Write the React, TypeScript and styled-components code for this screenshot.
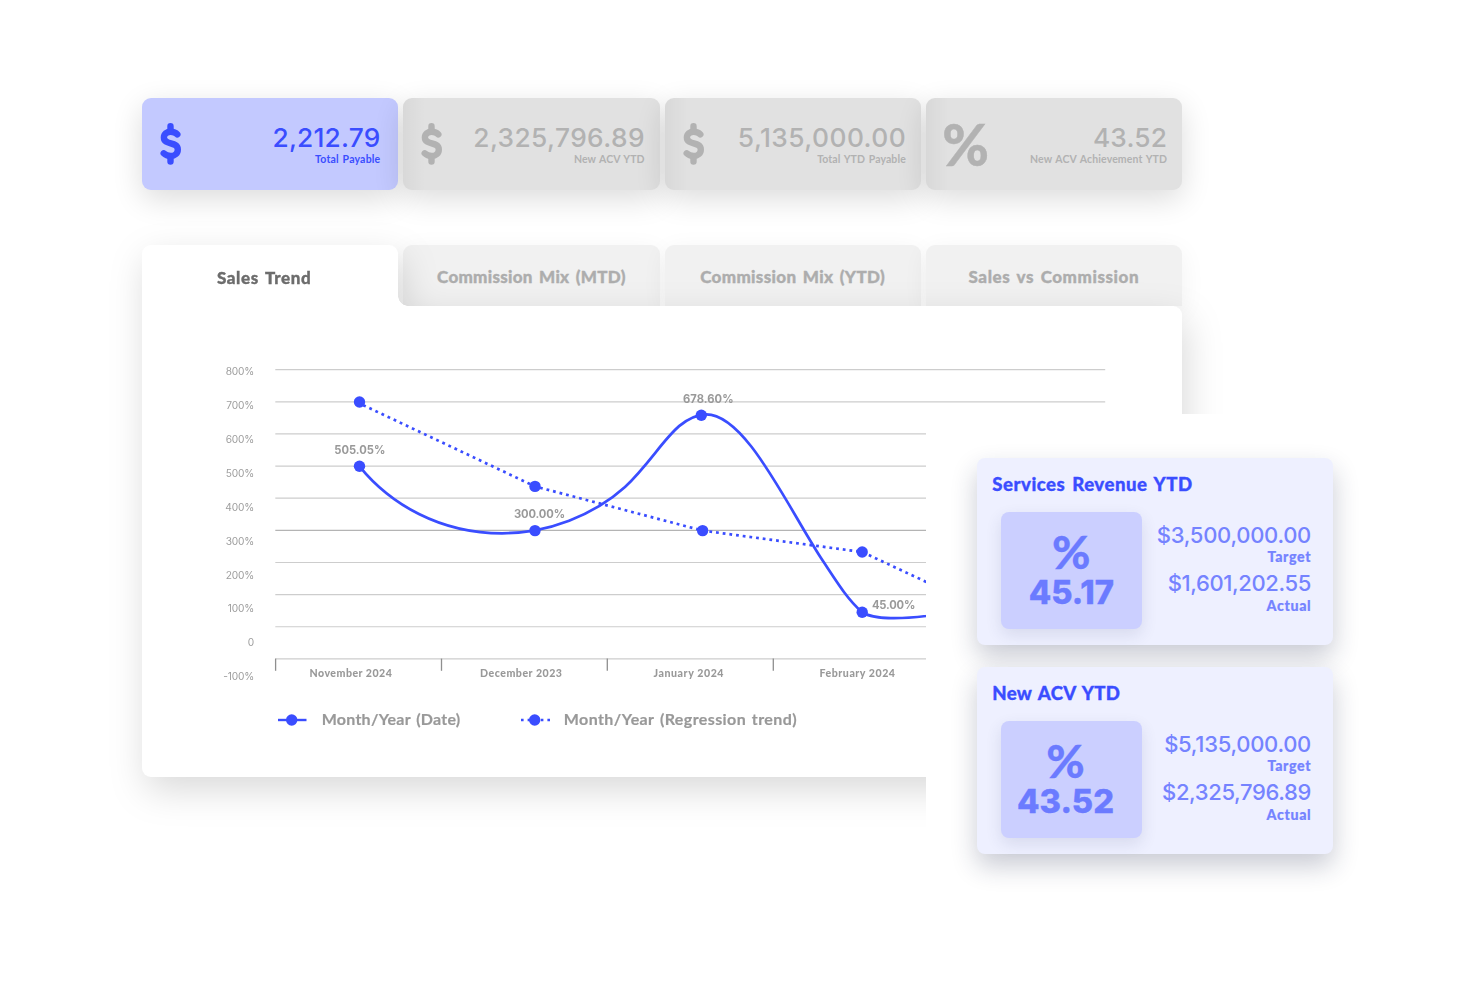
import React from "react";
import styled, { createGlobalStyle } from "styled-components";

const BLUE = "#3a4dff";

const GlobalStyle = createGlobalStyle`
  *, *::before, *::after { box-sizing: border-box; }
  body { margin: 0; background: #fff; }
`;

const Page = styled.main`
  position: relative;
  width: 1480px;
  height: 987px;
  overflow: hidden;
  background: #fff;
  padding: 98px 0 0 142px;
  font-family: Lato, "Liberation Sans", sans-serif;
`;

const Dashboard = styled.div`
  width: 1040px;
  display: flex;
  flex-direction: column;
  gap: 54.5px;
`;

/* ---------- KPI row ---------- */

const KpiRow = styled.section`
  display: grid;
  grid-template-columns: repeat(4, 1fr);
  gap: 5px;
`;

const KpiCard = styled.article<{ $active?: boolean }>`
  height: 92px;
  display: flex;
  justify-content: space-between;
  align-items: flex-start;
  padding: 25.3px 15px 0 18px;
  border-radius: 9px;
  color: ${(p) => (p.$active ? BLUE : "#b2b2b2")};
  background: ${(p) =>
    p.$active
      ? "#c3c9ff"
      : "linear-gradient(to right, rgba(0,0,0,.04), rgba(0,0,0,0) 22px), #e1e1e1"};
  box-shadow: 0 9px 30px rgba(0, 0, 0, 0.14);

  &:first-child { padding-right: 18px; }
`;

const KpiFigures = styled.div`
  display: flex;
  flex-direction: column;
  align-items: flex-end;
`;

const KpiValue = styled.div<{ $track: number }>`
  font: 500 26.3px/30px Inter, sans-serif;
  letter-spacing: ${(p) => p.$track}px;
  margin-right: ${(p) => -p.$track}px;
  white-space: nowrap;
`;

const KpiLabel = styled.div<{ $track: number }>`
  font-size: 10.5px;
  line-height: 12px;
  font-weight: 700;
  letter-spacing: ${(p) => p.$track}px;
  word-spacing: 1px;
  margin-right: ${(p) => -p.$track}px;
  white-space: nowrap;
`;

const PercentMark = styled.span`
  font: 900 56.5px/42px Lato, sans-serif;
  -webkit-text-stroke: 0.4px currentColor;
  width: 44px;
  margin-left: -1.5px;
`;

const DollarSvg = styled.svg`
  width: 22px;
  height: 44px;
  display: block;
  margin-top: -1px;
`;

const DollarIcon = () => (
  <DollarSvg viewBox="0 0 22 44" fill="none" stroke="currentColor" strokeLinecap="round">
    <path
      d="M17.3 12.4C15.7 10.6 13.5 9.7 10.8 9.7C6.8 9.7 3.9 12 3.9 15.6C3.9 23.6 17.8 19.3 17.8 27.4C17.8 31.4 14.7 34 10.7 34C7.8 34 5.5 33.1 3.7 31.3"
      strokeWidth="6.4"
    />
    <path d="M10.5 4.2v4M10.5 35.4v4.2" strokeWidth="6.4" />
  </DollarSvg>
);

/* ---------- Tabbed board ---------- */

const Board = styled.section`
  display: grid;
  grid-template-columns: repeat(4, 1fr);
  grid-template-rows: 61px 471px;
  column-gap: 5px;
`;

const InactiveTab = styled.button<{ $column: number }>`
  grid-row: 1;
  grid-column: ${(p) => p.$column};
  border: 0;
  padding: 3px 0 0;
  border-radius: 9px 9px 0 0;
  background: #f1f1f1;
  box-shadow: 0 6px 26px rgba(0, 0, 0, 0.06);
  color: #adadad;
`;

const TabLabel = styled.span<{ $track: number }>`
  font: 900 17px/20px Lato, sans-serif;
  letter-spacing: ${(p) => p.$track}px;
  word-spacing: 2px;
  -webkit-text-stroke: 0.35px currentColor;
  white-space: nowrap;
`;

const BoardCard = styled.div`
  grid-row: 1 / 3;
  grid-column: 1 / 5;
  display: flex;
  flex-direction: column;
  filter: drop-shadow(4px 13px 18px rgba(0, 0, 0, 0.15));
`;

const ActiveTab = styled.div`
  position: relative;
  width: 256.25px;
  height: 61px;
  display: flex;
  align-items: center;
  justify-content: center;
  padding: 6px 12px 0 0;
  background: #fff;
  border-radius: 9px 9px 0 0;
  color: #6c6c6c;

  /* concave fillet where the tab meets the card */
  &::after {
    content: "";
    position: absolute;
    left: 100%;
    bottom: 0;
    width: 10px;
    height: 10px;
    background: radial-gradient(circle at 100% 0, transparent 9.5px, #fff 10px);
  }
`;

const BoardBody = styled.div`
  height: 471px;
  padding: 44px 0 0 70px;
  background: #fff;
  border-radius: 0 9px 9px 9px;
`;

const ChartSvg = styled.svg`
  display: block;
  width: 920px;
  height: 340px;

  text { font-family: Inter, sans-serif; fill: #999; }
  .month { font-family: Lato, sans-serif; font-size: 10.6px; font-weight: 900; }
  .axis { font-size: 10.2px; letter-spacing: -0.2px; font-weight: 400; text-anchor: end; fill: #9e9e9e; }
  .point { font-size: 11.2px; font-weight: 700; }
`;

const GRID_TOP = 369.7;
const GRID_STEP = 32.13;
const AXIS_LABELS = ["800%", "700%", "600%", "500%", "400%", "300%", "200%", "100%", "0", "-100%"];
const MONTHS = [
  { text: "November 2024", x: 309.5, w: 82.3 },
  { text: "December 2023", x: 480, w: 82 },
  { text: "January 2024", x: 653.5, w: 70 },
  { text: "February 2024", x: 819.5, w: 75.5 },
];
const POINT_LABELS = [
  { text: "505.05%", x: 334.3, y: 454.2, w: 51 },
  { text: "300.00%", x: 514, y: 518.2, w: 51 },
  { text: "678.60%", x: 683, y: 403.2, w: 50.5 },
  { text: "45.00%", x: 872, y: 608.5, w: 43.3 },
];
const DOTS = [
  [359.5, 402], [359.5, 466.3], [535, 486.4], [535, 530.6],
  [701.3, 415.3], [702.6, 530.6], [862.2, 552], [862.2, 612.3],
];

const Chart = () => (
  <ChartSvg viewBox="212 350 920 340">
    {AXIS_LABELS.map((label, i) => (
      <React.Fragment key={label}>
        <line
          x1="275.3"
          x2="1105.2"
          y1={GRID_TOP + i * GRID_STEP}
          y2={GRID_TOP + i * GRID_STEP}
          stroke={i === 5 ? "#b4b4b4" : "#cdcdcd"}
          strokeWidth="1.2"
        />
        <text className="axis" x="254" y={374.7 + i * 33.97}>{label}</text>
      </React.Fragment>
    ))}
    {[275.6, 441.5, 607.3, 773.3].map((x) => (
      <line key={x} x1={x} x2={x} y1="658.6" y2="670.8" stroke="#8f8f8f" strokeWidth="1.3" />
    ))}
    {MONTHS.map((m) => (
      <text key={m.text} className="month" x={m.x} y="677.3" textLength={m.w}>{m.text}</text>
    ))}
    <path
      d="M359.5 403.4L535 486.4L702.6 530.6L862.2 552L935 586"
      fill="none"
      stroke={BLUE}
      strokeWidth="2.7"
      strokeDasharray="2.8 3.93"
      strokeDashoffset="2.6"
    />
    <path
      d="M359.5 466.3C390 504 440 533.3 502 533.3C548 533.3 594 515 625 487C660 454 674 416 706 414.3C745 414 785 502 821 558C838 584 848 600 862.2 612.3C874 620 905 618.5 926 616L950 612"
      fill="none"
      stroke={BLUE}
      strokeWidth="2.7"
    />
    {DOTS.map(([x, y]) => (
      <circle key={`${x}-${y}`} cx={x} cy={y} r="5.7" fill={BLUE} />
    ))}
    {POINT_LABELS.map((p) => (
      <text key={p.text} className="point" x={p.x} y={p.y} textLength={p.w}>{p.text}</text>
    ))}
  </ChartSvg>
);

const Legend = styled.div`
  display: flex;
  align-items: center;
  gap: 61px;
  padding: 19px 0 0 65.5px;
`;

const LegendItem = styled.div<{ $gap: number }>`
  display: flex;
  align-items: center;
  gap: ${(p) => p.$gap}px;
  color: #999;
`;

const LegendText = styled.span<{ $track: number }>`
  font: 700 16px/20px Lato, sans-serif;
  letter-spacing: ${(p) => p.$track}px;
  word-spacing: 1.5px;
  margin-right: ${(p) => -p.$track}px;
  -webkit-text-stroke: 0.2px currentColor;
  white-space: nowrap;
`;

const LegendMark = styled.svg`
  width: 29px;
  height: 12px;
  margin-top: 2px;
`;

/* ---------- Floating metric cards ---------- */

const Overlay = styled.aside`
  position: absolute;
  left: 926px;
  top: 414px;
  right: 0;
  bottom: 0;
  padding: 44px 0 0 51px;
  background: #fff;
  display: flex;
  flex-direction: column;
  gap: 22px;
`;

const MetricCard = styled.article`
  width: 356.3px;
  height: 187px;
  padding: 15px 22px 0 15.3px;
  border-radius: 8px;
  background: #eef0ff;
  box-shadow: 0 12px 26px rgba(30, 38, 75, 0.24);
`;

const MetricTitle = styled.h2<{ $track: number }>`
  margin: 0;
  font: 900 18.6px/22px Lato, sans-serif;
  letter-spacing: ${(p) => p.$track}px;
  word-spacing: 2px;
  -webkit-text-stroke: 0.35px currentColor;
  color: ${BLUE};
`;

const MetricBody = styled.div`
  display: flex;
  justify-content: space-between;
  padding: 16.5px 0 0 8.7px;
`;

const ScoreBox = styled.div`
  width: 141px;
  height: 117px;
  display: flex;
  justify-content: flex-end;
  padding: 18.5px 28px 0 0;
  border-radius: 8px;
  background: #cbcfff;
  box-shadow: 0 6px 16px rgba(50, 60, 110, 0.12);
  color: #6b7bff;
`;

const Score = styled.div`
  display: flex;
  flex-direction: column;
  align-items: center;
`;

const ScorePercent = styled.span`
  height: 42px;
  font: 900 46.5px/42px Lato, sans-serif;
  -webkit-text-stroke: 0.3px currentColor;
`;

const ScoreValue = styled.span`
  height: 40px;
  font: 800 32.7px/40px Inter, sans-serif;
  -webkit-text-stroke: 0.4px currentColor;
`;

const MetricFigures = styled.div`
  display: flex;
  flex-direction: column;
  align-items: flex-end;
  padding-top: 10.3px;
  color: #7583ff;
`;

const Amount = styled.div<{ $track: number }>`
  font: 500 22px/27.2px Inter, sans-serif;
  letter-spacing: ${(p) => p.$track}px;
  margin-right: ${(p) => -p.$track}px;
  white-space: nowrap;
`;

const AmountLabel = styled.div`
  font: 900 14.2px/16px Lato, sans-serif;
  letter-spacing: 0.65px;
  -webkit-text-stroke: 0.2px currentColor;
  margin: 0 0 5.4px 0;
`;

const KPIS = [
  { value: "2,212.79", label: "Total Payable", icon: "$", vt: 0.2, lt: 0.2 },
  { value: "2,325,796.89", label: "New ACV YTD", icon: "$", vt: 0.4, lt: 0.05 },
  { value: "5,135,000.00", label: "Total YTD Payable", icon: "$", vt: 0.45, lt: 0.1 },
  { value: "43.52", label: "New ACV Achievement YTD", icon: "%", vt: 0.2, lt: 0.11 },
];

const TABS = [
  { text: "Commission Mix (MTD)", track: 0.28 },
  { text: "Commission Mix (YTD)", track: 0.33 },
  { text: "Sales vs Commission", track: 0.57 },
];

const METRICS = [
  {
    title: "Services Revenue YTD", titleTrack: 0.5, score: "45.17",
    target: "$3,500,000.00", targetTrack: -0.28, actual: "$1,601,202.55", actualTrack: -0.38,
  },
  {
    title: "New ACV YTD", titleTrack: 0.27, score: "43.52",
    target: "$5,135,000.00", targetTrack: -0.28, actual: "$2,325,796.89", actualTrack: -0.38,
  },
];

export default function App() {
  return (
    <Page>
      <GlobalStyle />
      <Dashboard>
        <KpiRow>
          {KPIS.map((k, i) => (
            <KpiCard key={k.label} $active={i === 0}>
              {k.icon === "$" ? <DollarIcon /> : <PercentMark>%</PercentMark>}
              <KpiFigures>
                <KpiValue $track={k.vt}>{k.value}</KpiValue>
                <KpiLabel $track={k.lt}>{k.label}</KpiLabel>
              </KpiFigures>
            </KpiCard>
          ))}
        </KpiRow>

        <Board>
          {TABS.map((t, i) => (
            <InactiveTab key={t.text} $column={i + 2}>
              <TabLabel $track={t.track}>{t.text}</TabLabel>
            </InactiveTab>
          ))}
          <BoardCard>
            <ActiveTab>
              <TabLabel $track={0.6}>Sales Trend</TabLabel>
            </ActiveTab>
            <BoardBody>
              <Chart />
              <Legend>
                <LegendItem $gap={15.2}>
                  <LegendMark viewBox="0 0 29 12">
                    <path d="M0 6h28.5" stroke={BLUE} strokeWidth="2.4" />
                    <circle cx="13.7" cy="6" r="5.7" fill={BLUE} />
                  </LegendMark>
                  <LegendText $track={0.25}>Month/Year (Date)</LegendText>
                </LegendItem>
                <LegendItem $gap={13.5}>
                  <LegendMark viewBox="0 0 29 12">
                    <path d="M0 6h29" stroke={BLUE} strokeWidth="2.6" strokeDasharray="2.6 4" />
                    <circle cx="13.7" cy="6" r="5.7" fill={BLUE} />
                  </LegendMark>
                  <LegendText $track={0.4}>Month/Year (Regression trend)</LegendText>
                </LegendItem>
              </Legend>
            </BoardBody>
          </BoardCard>
        </Board>
      </Dashboard>

      <Overlay>
        {METRICS.map((m) => (
          <MetricCard key={m.title}>
            <MetricTitle $track={m.titleTrack}>{m.title}</MetricTitle>
            <MetricBody>
              <ScoreBox>
                <Score>
                  <ScorePercent>%</ScorePercent>
                  <ScoreValue>{m.score}</ScoreValue>
                </Score>
              </ScoreBox>
              <MetricFigures>
                <Amount $track={m.targetTrack}>{m.target}</Amount>
                <AmountLabel>Target</AmountLabel>
                <Amount $track={m.actualTrack}>{m.actual}</Amount>
                <AmountLabel>Actual</AmountLabel>
              </MetricFigures>
            </MetricBody>
          </MetricCard>
        ))}
      </Overlay>
    </Page>
  );
}
